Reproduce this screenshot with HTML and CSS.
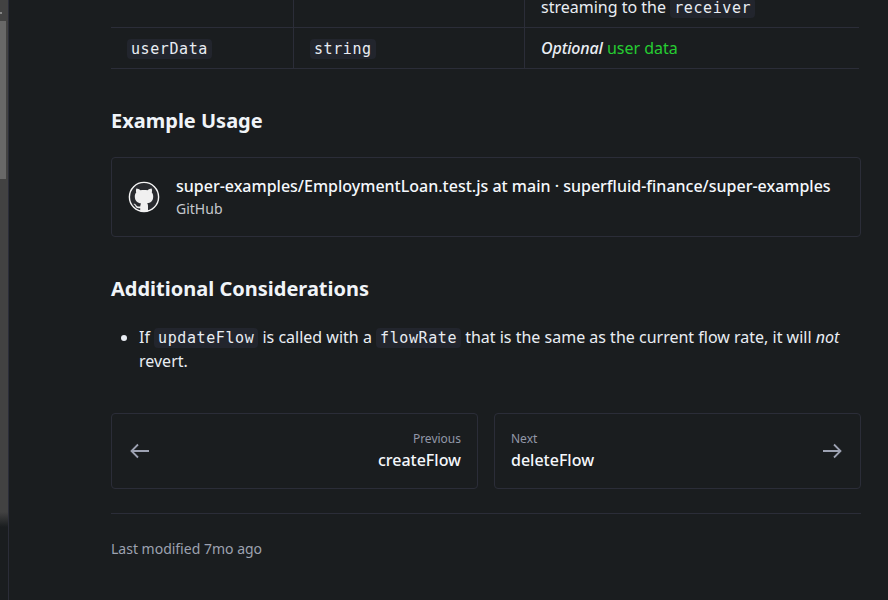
FILE: index.html
```html
<!DOCTYPE html>
<html lang="en">
<head>
<meta charset="utf-8">
<title>updateFlow</title>
<link rel="stylesheet" href="styles.css">
</head>
<body>
<div class="shell">
  <aside class="rail">
    <div class="cap"></div>
    <div class="thumb"></div>
    <div class="track"></div>
    <span class="mark"></span>
  </aside>
  <main class="content">
    <div class="table">
      <div class="row first">
        <div class="cell"></div>
        <div class="cell"></div>
        <div class="cell">streaming to the <code>receiver</code></div>
      </div>
      <div class="row">
        <div class="cell"><code>userData</code></div>
        <div class="cell"><code>string</code></div>
        <div class="cell"><em class="optional">Optional</em> <a class="link">user data</a></div>
      </div>
    </div>

    <h3 class="heading">Example Usage</h3>
    <a class="card embed">
      <svg class="octo" width="32" height="32" viewBox="0 0 32 32">
        <circle cx="16" cy="16" r="14.6" fill="#292b2f" stroke="#f5f5f5" stroke-width="1.4"/>
        <path fill="#f0f0f0" d="M8.400 7.600c1.200-.1 2.900.9 4 1.700 2.300-.5 4.900-.5 7.200 0 1.100-.8 2.800-1.800 4-1.700.6 1.500.5 2.900.2 4 .9 1 1.400 2.300 1.400 3.900 0 4.600-2.600 6.300-6.100 6.800.7.600.9 1.500.9 2.700V30.300Q16 31.400 12.200 30.300V27.200c-3.500.6-4.500-1.400-5-2.500-.4-.8-1.100-1.200-1.700-1.700.3-.7 1.800-.2 2.600 1 .9 1.400 2 1.900 4.100 1.400.1-1.400.4-2.400.9-3-3.500-.5-6.300-2.300-6.300-6.900 0-1.600.5-2.900 1.400-3.900-.3-1.100-.4-2.500.2-4z"/>
      </svg>
      <span class="stack">
        <strong>super-examples/EmploymentLoan.test.js at main · superfluid-finance/super-examples</strong>
        <small>GitHub</small>
      </span>
    </a>

    <h3 class="heading">Additional Considerations</h3>
    <ul class="list">
      <li>If <code>updateFlow</code> is called with a <code>flowRate</code> that is the same as the current flow rate, it will <em>not</em> revert.</li>
    </ul>

    <nav class="pager">
      <a class="card page">
        <svg class="arrow" width="24" height="24" viewBox="0 0 24 24"><path d="M21 12H4M10 5.500 3.500 12 10 18.500"/></svg>
        <span class="stack end"><small>Previous</small><strong>createFlow</strong></span>
      </a>
      <a class="card page">
        <span class="stack"><small>Next</small><strong>deleteFlow</strong></span>
        <svg class="arrow" width="24" height="24" viewBox="0 0 24 24"><path d="M3 12H20M14 5.500 20.500 12 14 18.500"/></svg>
      </a>
    </nav>
    <footer class="footer">Last modified 7mo ago</footer>
  </main>
</div>
</body>
</html>
```
FILE: styles.css
```css
* { box-sizing: border-box; }
body {
  margin: 0;
  background: #1a1d1f;
  color: #e9edf3;
  font: 16px/24px "Noto Sans", sans-serif;
}
.shell { display: flex; height: 600px; overflow: hidden; }
.rail {
  position: relative;
  width: 9px;
  flex: none;
  border-right: 1px solid #2b2d38;
}
.cap { height: 21px; background: #424242; }
.thumb { height: 158px; background: #686868; border-right: 2px solid #424242; }
.track { height: 348px; background: linear-gradient(#424242 333px, #1a1d1f 348px); }
.mark { position: absolute; left: 0; top: 12px; width: 2px; height: 2px; background: #858585; }
.content { width: 750px; margin-left: 102px; flex: none; }
.table { width: 748px; }
.row {
  display: grid;
  grid-template-columns: 183px 231px 334px;
  height: 41px;
  border-bottom: 1px solid #2b2d38;
}
.row.first { height: 28px; }
.cell { padding: 8px 16px; border-right: 1px solid #2b2d38; white-space: nowrap; }
.cell:last-child { border-right: 0; }
.first .cell { padding-top: 0; margin-top: -5px; }
code {
  display: inline-block;
  height: 20px;
  padding: 0 4px;
  border-radius: 4px;
  background: #22252d;
  font: 15px/20px "DejaVu Sans Mono", monospace;
  letter-spacing: 0.59px;
}
.optional { font-weight: 500; letter-spacing: -0.15px; }
.link { color: #26cc32; }
.heading { margin: 38px 0 0; font-size: 20px; line-height: 28px; font-weight: 700; color: #f0f4f8; }
.card {
  display: flex;
  align-items: center;
  border: 1px solid #2b2d38;
  border-radius: 4px;
}
.embed { height: 80px; margin-top: 22px; padding: 0 16px; gap: 16px; }
.embed .stack { padding-bottom: 2px; }
.octo { flex: none; }
.stack { display: flex; flex-direction: column; flex: 1; white-space: nowrap; }
.end { align-items: flex-end; }
strong { font-weight: 500; color: #f5f8fc; }
small { font-size: 14px; line-height: 21px; color: #c5c8cd; }
.list { margin: 22px 0 0; padding-left: 28px; }
.pager { display: grid; grid-template-columns: 1fr 1fr; gap: 16px; margin-top: 40px; }
.page { height: 76px; padding: 0 16px; }
.page small { font-size: 12px; line-height: 18px; color: #9298a8; }
.arrow { fill: none; stroke: #9da2b2; stroke-width: 1.8; }
.footer {
  margin-top: 24px;
  padding-top: 24px;
  border-top: 1px solid #2b2d38;
  font-size: 14px;
  line-height: 21px;
  color: #9da2b0;
}
```
